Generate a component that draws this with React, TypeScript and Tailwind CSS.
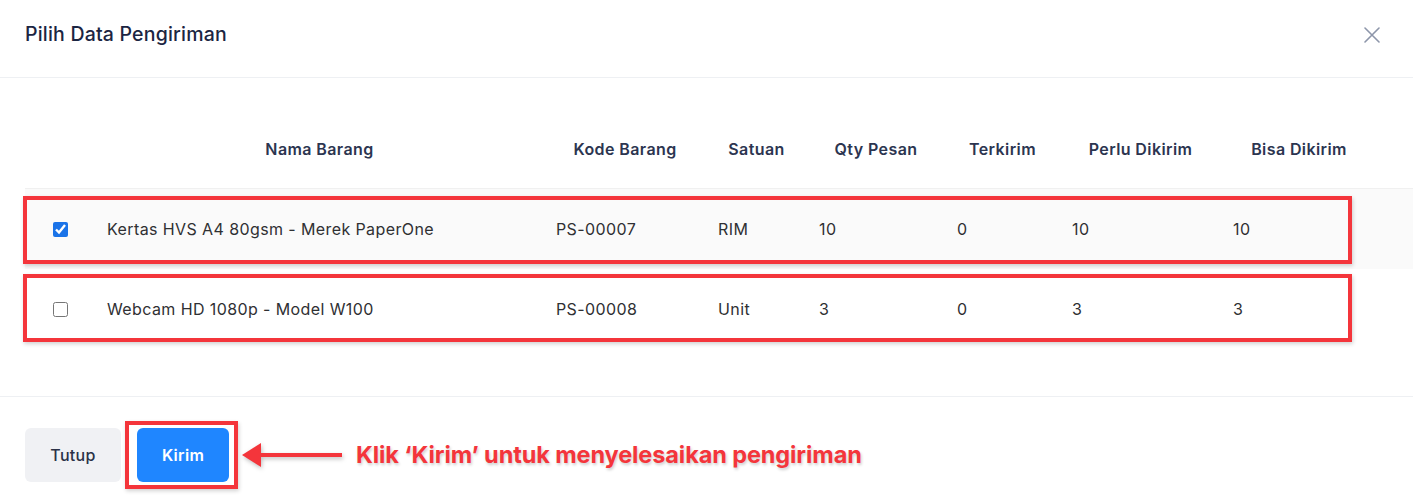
import React from "react";

const COLS = "grid grid-cols-[70px_449px_162px_101px_138px_115px_161px_156px_16px]";

const HEADERS = ["Nama Barang", "Kode Barang", "Satuan", "Qty Pesan", "Terkirim", "Perlu Dikirim", "Bisa Dikirim"];

const ROWS = [
  { checked: true, name: "Kertas HVS A4 80gsm - Merek PaperOne", kode: "PS-00007", satuan: "RIM", qty: "10", terkirim: "0", perlu: "10", bisa: "10" },
  { checked: false, name: "Webcam HD 1080p - Model W100", kode: "PS-00008", satuan: "Unit", qty: "3", terkirim: "0", perlu: "3", bisa: "3" },
];

export default function App() {
  return (
    <div
      className="relative h-[504px] w-[1413px] overflow-hidden bg-white"
      style={{ fontFamily: "Inter, 'Noto Sans', sans-serif" }}
    >
      {/* Header */}
      <div className="flex h-[78px] items-center justify-between border-b border-[#eef0f3] pb-[7px] pl-[25px] pr-[33px]">
        <h1 className="text-[19.5px] font-medium leading-none tracking-[0.2px] text-[#1b2542]">Pilih Data Pengiriman</h1>
        <svg width="16" height="16" viewBox="0 0 16 16" className="text-[#8d96aa]">
          <path d="M1 1L15 15M15 1L1 15" stroke="currentColor" strokeWidth="1.6" strokeLinecap="round" />
        </svg>
      </div>

      {/* Table */}
      <div className="pl-[25px] pt-[31px] pb-[47px]">
        <div className={`${COLS} h-[80px] items-center border-b border-[#f0f0f0]`}>
          <div />
          {HEADERS.map((h) => (
            <div key={h} className="px-3 text-center text-[16px] font-semibold tracking-[0.4px] text-[#2c3550]">
              {h}
            </div>
          ))}
          <div />
        </div>
        {ROWS.map((r, i) => (
          <div
            key={r.kode}
            className={`${COLS} h-[80px] items-center text-[16px] tracking-[0.4px] text-[#2f3033] ${i === 0 ? "bg-[#fafafa]" : "bg-white"}`}
          >
            <div className="flex justify-center">
              <input
                type="checkbox"
                defaultChecked={r.checked}
                className="h-[15px] w-[15px] accent-[#1a73e8]"
              />
            </div>
            <div className="px-3">{r.name}</div>
            <div className="px-3">{r.kode}</div>
            <div className="px-3">{r.satuan}</div>
            <div className="px-3">{r.qty}</div>
            <div className="px-3">{r.terkirim}</div>
            <div className="px-3">{r.perlu}</div>
            <div className="px-3">{r.bisa}</div>
            <div />
          </div>
        ))}
      </div>

      {/* Footer */}
      <div className="flex items-center border-t border-[#eef0f3] pl-[25px] pt-[31px]">
        <button className="h-[54px] w-[96px] rounded-md bg-[#f0f1f4] text-[16px] font-medium tracking-[0.3px] text-[#2a3147]">Tutup</button>
        <button className="ml-4 h-[54px] w-[92px] rounded-md bg-[#1f86ff] text-[16px] font-semibold tracking-[0.3px] text-white">Kirim</button>
        <div className="ml-[13px] flex items-center">
          <svg width="100" height="26" viewBox="0 0 100 26" className="drop-shadow-[1px_2px_2px_rgba(0,0,0,0.25)]">
            <path d="M0 13L19 1V25Z" fill="#f4353b" />
            <rect x="17" y="11" width="83" height="4" fill="#f4353b" />
          </svg>
          <span className="ml-[14px] text-[23.5px] font-bold tracking-[-0.1px] text-[#f4353b] [text-shadow:1px_2px_3px_rgba(0,0,0,0.2)]">
            Klik ‘Kirim’ untuk menyelesaikan pengiriman
          </span>
        </div>
      </div>

      {/* Annotation boxes */}
      <div className="pointer-events-none absolute left-[23px] top-[196px] h-[68px] w-[1329px] border-4 border-[#f4353b] shadow-[1px_2px_4px_rgba(0,0,0,0.18)]" />
      <div className="pointer-events-none absolute left-[23px] top-[274px] h-[68px] w-[1329px] border-4 border-[#f4353b] shadow-[1px_2px_4px_rgba(0,0,0,0.18)]" />
      <div className="pointer-events-none absolute left-[125px] top-[421px] h-[68px] w-[113px] border-4 border-[#f4353b] shadow-[1px_2px_4px_rgba(0,0,0,0.18)]" />
    </div>
  );
}
